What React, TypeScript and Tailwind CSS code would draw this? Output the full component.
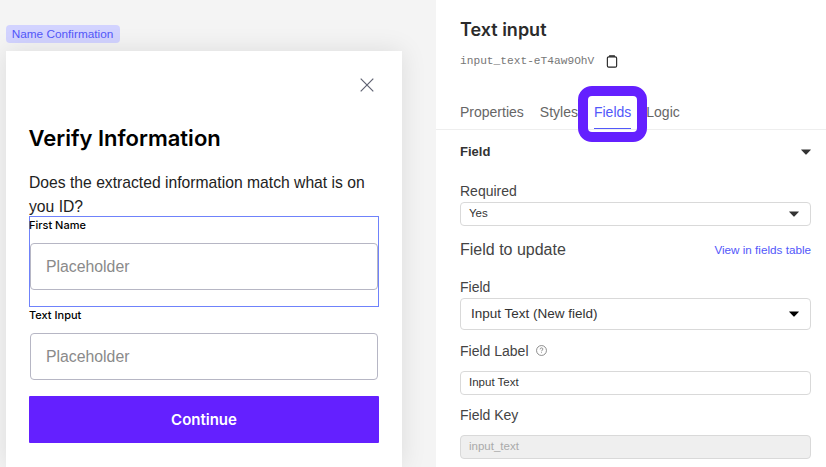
import React from 'react';

const sans = "font-['Liberation_Sans',sans-serif]";

const Caret = ({ className }: { className: string }) => (
  <svg viewBox="0 0 10 6" className={className} fill="currentColor">
    <path d="M0.6 0.4h8.8c.4 0 .6.4.3.7L5.4 5.5c-.2.2-.6.2-.8 0L.3 1.1C0 .8.2.4.6.4z" />
  </svg>
);

const PreviewField = ({ placeholder }: { placeholder: string }) => (
  <div className="flex h-[47px] items-center rounded border border-[#b6b6c4] bg-white pl-[15px] text-[15.8px] text-[#8a8a8a]">
    {placeholder}
  </div>
);

const Preview = () => (
  <div className="flex h-full w-[436px] shrink-0 flex-col bg-[#f4f4f4] pl-[6px] pr-[34px] pt-[25px]">
    <div className="flex h-[18px] w-[114px] items-center justify-center rounded bg-[#d2d3ff] pt-px pr-px text-[11.8px] text-[#5258fa]">
      Name Confirmation
    </div>
    <div className="mt-2 flex-1 bg-white px-[23px] pt-[27px] shadow-[0_0_24px_rgba(0,0,0,0.1)]">
      <div className="flex justify-end pr-[5px]">
        <svg viewBox="0 0 14 14" className="h-[14px] w-[14px] text-[#5f6272]" fill="none" stroke="currentColor" strokeWidth="1.2">
          <path d="M0.7 0.7l12.6 12.6M13.3 0.7L0.7 13.3" />
        </svg>
      </div>
      <h1 className="mt-[32px] -ml-[0.5px] font-['Inter',sans-serif] text-[22px] leading-[28px] font-semibold text-black">Verify Information</h1>
      <p className="mt-[19px] -mb-[3px] w-[350px] text-[15.7px] leading-[24px] text-[#222]">
        Does the extracted information match what is on you ID?
      </p>
      <div className="h-[91px] border border-[#6f82fb] pt-px">
        <div className="-ml-px font-['Inter',sans-serif] text-[11px] leading-[14px] font-medium text-black">First Name</div>
        <div className="mt-[11px]">
          <PreviewField placeholder="Placeholder" />
        </div>
      </div>
      <div className="mt-[1px] font-['Inter',sans-serif] text-[11px] leading-[14px] font-medium text-black">Text Input</div>
      <div className="mt-[11px] px-px">
        <PreviewField placeholder="Placeholder" />
      </div>
      <button className="mt-4 flex h-[47px] w-full items-center justify-center rounded-[1px] bg-[#6420ff] pt-[2px] font-['Inter',sans-serif] text-[15px] font-semibold text-white">
        Continue
      </button>
    </div>
  </div>
);

const Label = ({ children }: { children: React.ReactNode }) => (
  <div className="text-[14px] leading-[18px] text-[#444]">{children}</div>
);

const Inspector = () => (
  <div className="relative flex h-full flex-1 flex-col bg-white">
    <div className="pr-[15px] pl-6 pt-[18px]">
      <h2 className="font-['Inter',sans-serif] text-[18px] leading-[24px] font-semibold text-[#2b2b2b]">Text input</h2>
      <div className="mt-[12px] flex items-center gap-3">
        <span className="font-['Liberation_Mono',monospace] text-[11.2px] leading-[14px] text-[#777]">input_text-eT4aw9OhV</span>
        <svg viewBox="0 0 12 14" className="h-[13px] w-[12px] text-[#222]" fill="none" stroke="currentColor" strokeWidth="1.2">
          <rect x="1" y="2" width="10" height="11" rx="1.5" />
          <path d="M3.5 2V1h5v1" />
        </svg>
      </div>
    </div>
    <div className="mt-[35px] flex h-[27px] gap-4 border-b border-[#eee] px-6 text-[14px] leading-[18px] text-[#666]">
      <span>Properties</span>
      <span>Styles</span>
      <span className="relative h-[26px] text-[#5258fa] after:absolute after:right-0 after:bottom-0 after:left-0 after:h-px after:bg-[#5258fa]">
        Fields
      </span>
      <span className="-ml-px">Logic</span>
    </div>
    <div className="absolute top-[86px] left-[142px] h-[56px] w-[69px] rounded-[14px] border-[10px] border-[#6420ff]" />

    <div className="pr-[15px] pl-6">
      <div className="mt-[13px] flex items-center justify-between">
        <span className="text-[13px] leading-[18px] font-bold text-[#333]">Field</span>
        <Caret className="h-[6px] w-[10px] text-[#333]" />
      </div>
      <div className="mt-[21px]">
        <Label>Required</Label>
      </div>
      <div className="mt-[2px] flex h-[24px] items-center justify-between rounded border border-[#d9d9d9] pr-[11px] pl-2 text-[11.5px] text-[#333]">
        Yes
        <Caret className="h-[6px] w-[10px] text-[#333]" />
      </div>
      <div className="mt-[14px] flex items-center justify-between">
        <span className="text-[16px] leading-[20px] text-[#444]">Field to update</span>
        <span className="text-[11.7px] text-[#5258fa]">View in fields table</span>
      </div>
      <div className="mt-[18px]">
        <Label>Field</Label>
      </div>
      <div className="mt-[2px] flex h-[32px] items-center justify-between rounded border border-[#d9d9d9] pr-[11px] pl-[10px] text-[13.5px] text-[#333]">
        Input Text (New field)
        <Caret className="h-[6px] w-[10px] text-black" />
      </div>
      <div className="mt-[12px] flex items-center gap-[8px]">
        <Label>Field Label</Label>
        <svg viewBox="0 0 12 12" className="mb-[2px] -ml-px h-[11px] w-[11px] text-[#666]" fill="none" stroke="currentColor" strokeWidth="0.8">
          <circle cx="6" cy="6" r="5.4" />
          <path d="M4.5 4.7c0-2 3-2 3-.2 0 1.1-1.5 1.1-1.5 2.4M6 8v.8" />
        </svg>
      </div>
      <div className="mt-[11px] flex h-[24px] items-center rounded border border-[#d9d9d9] pl-2 text-[11.5px] text-[#333]">Input Text</div>
      <div className="mt-[11px]">
        <Label>Field Key</Label>
      </div>
      <div className="mt-[11px] flex h-[24px] items-center rounded border border-[#d9d9d9] bg-[#efefef] pl-2 text-[11.5px] text-[#aaa]">input_text</div>
    </div>
  </div>
);

export default function App() {
  return (
    <div className={`flex h-[467px] w-[826px] overflow-hidden ${sans}`}>
      <Preview />
      <Inspector />
    </div>
  );
}
